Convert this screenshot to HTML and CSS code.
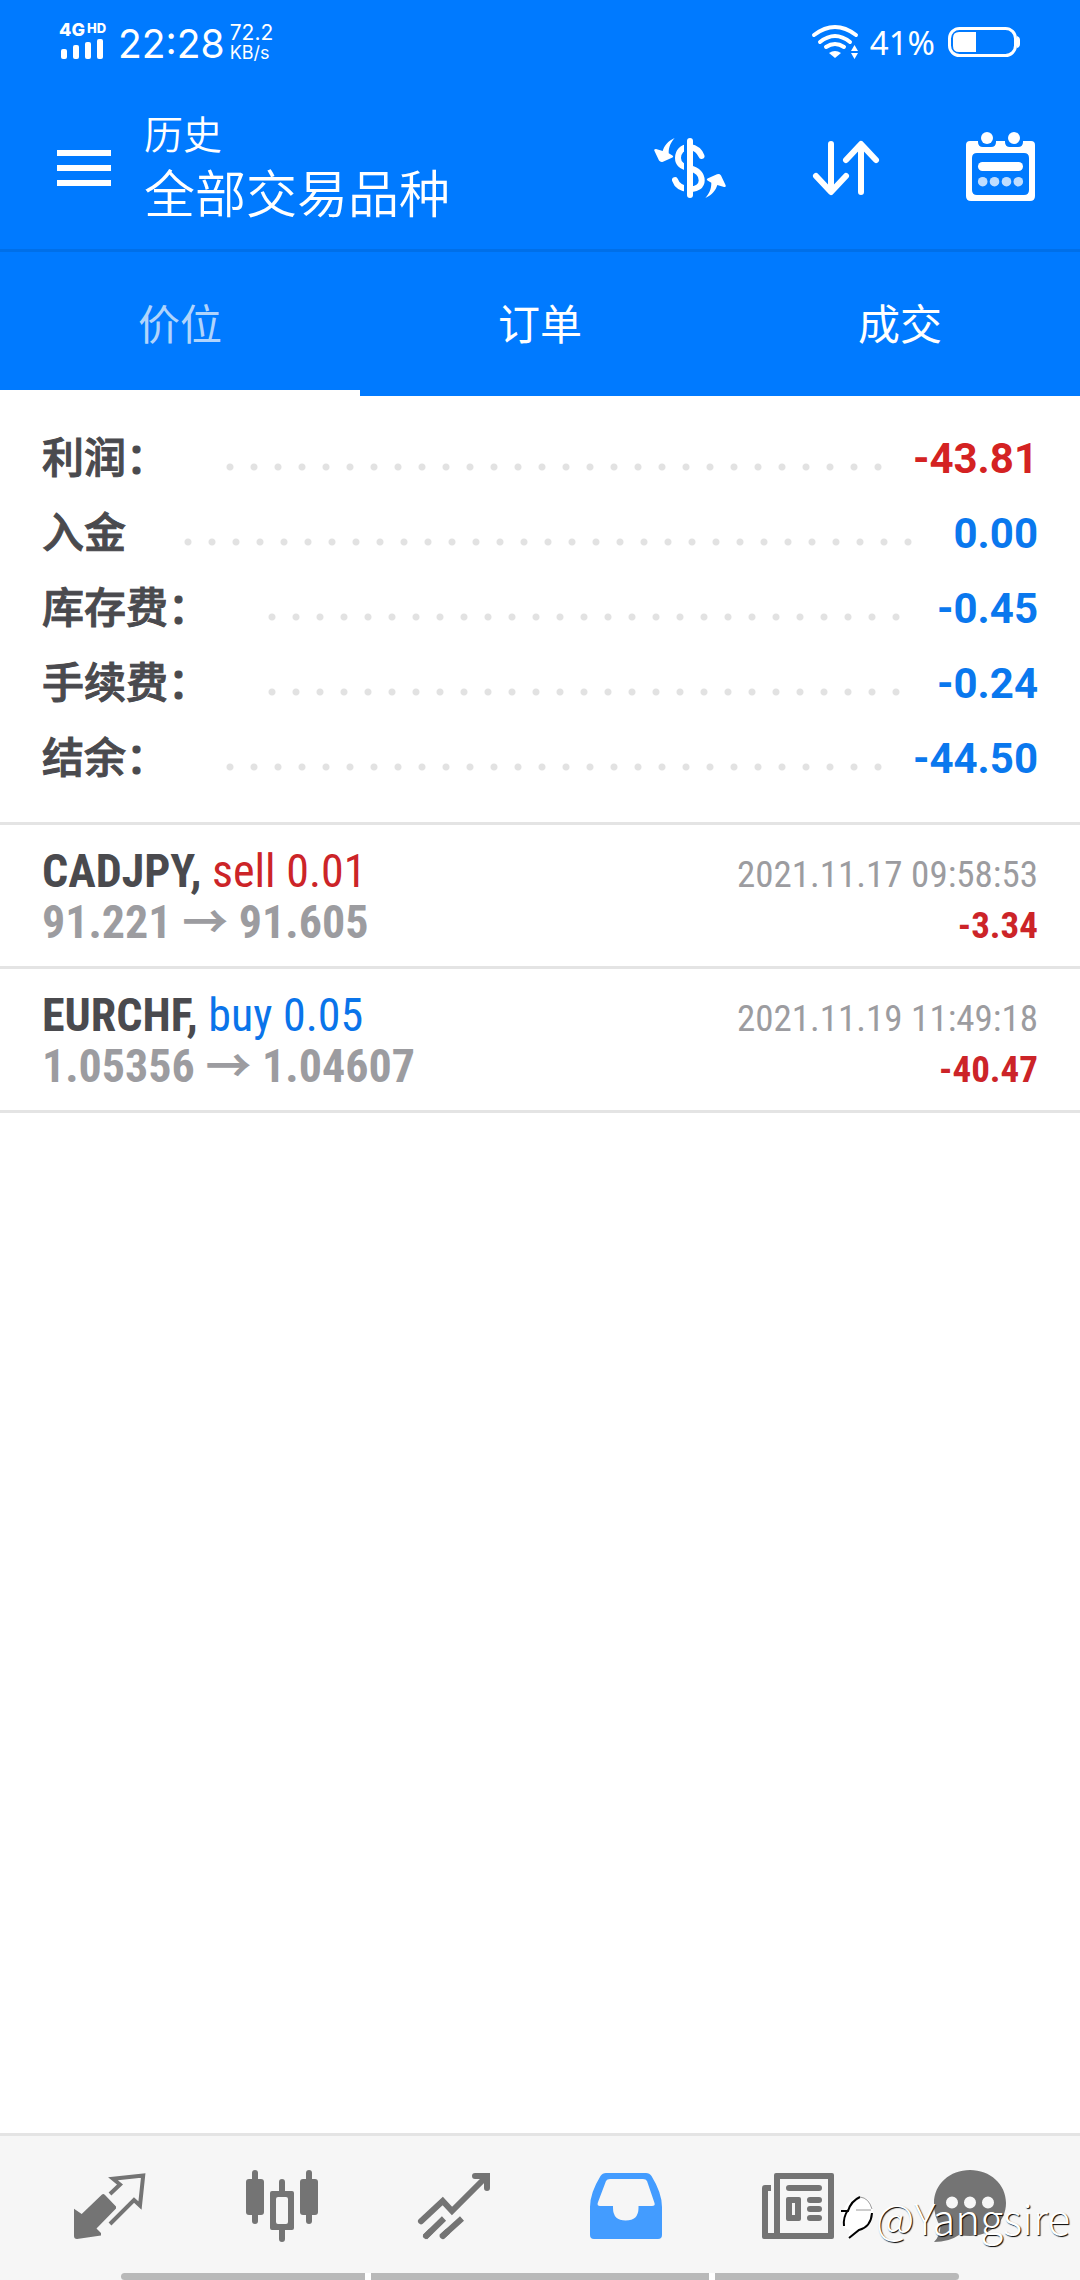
FILE: index.html
```html
<!DOCTYPE html>
<html lang="zh-CN">
<head>
<meta charset="utf-8">
<meta name="viewport" content="width=device-width, initial-scale=1">
<title>历史</title>
<link rel="stylesheet" href="styles.css">
</head>
<body>
<div class="app">
  <div class="status">
    <div class="signal">
      <div class="network">4G<span class="network-hd">HD</span></div>
      <svg class="bars" viewBox="0 0 44 20" width="44" height="20" fill="currentColor"><rect y="10" width="6" height="10" rx="2"/><rect x="12" y="6" width="6" height="14" rx="2"/><rect x="24" y="3" width="6" height="17" rx="2"/><rect x="36" width="6" height="20" rx="2"/></svg>
    </div>
    <div class="clock">22:28</div>
    <div class="speed"><span>72.2</span><span class="speed-unit">KB/s</span></div>
    <svg class="wifi" viewBox="0 0 46 34" width="46" height="34" fill="none" stroke="currentColor" stroke-width="4" stroke-linecap="round"><path d="M2 10Q23-6 44 10M8 17Q23 5 38 17M14 22Q23 16 32 22"/><path d="M17 28Q23 24 29 28L23 33Z" fill="currentColor" stroke="none"/><path d="M39 26L42.500 20 46 26ZM39 28L42.500 34 46 28Z" fill="currentColor" stroke="none"/></svg>
    <div class="percent">41%</div>
    <svg class="battery" viewBox="0 0 72 30" width="72" height="30"><rect x="1.500" y="1.500" width="66" height="27" rx="10" fill="none" stroke="currentColor" stroke-width="3"/><path d="M28 5V25H11Q5 25 5 19V11Q5 5 11 5ZM69 9Q72 10 72 13V17Q72 20 69 21Z" fill="currentColor"/></svg>
  </div>

  <header class="toolbar">
    <button class="icon-button menu" aria-label="菜单"><svg viewBox="0 0 54 36" width="54" height="36" fill="currentColor"><path d="M0 0H54V6H0ZM0 15H54V21H0ZM0 30H54V36H0Z"/></svg></button>
    <div class="heading">
      <h1 class="heading-title">历史</h1>
      <p class="heading-filter">全部交易品种</p>
    </div>
    <div class="actions">
      <button class="icon-button" aria-label="货币"><svg viewBox="0 0 72 72" width="72" height="72" fill="none" stroke="currentColor" stroke-width="6" stroke-linecap="round"><path d="M47.500 24C45.500 19 42 16 36 15C28 14.500 24 20 24 26C24 32 28 35 36 36.500C44 38 47.700 43 47.700 48.500C47.700 54 43 57 36 57.500C29 57 23 54 21 48"/><path class="cut" d="M31.500 8V64" stroke-width="3" stroke-linecap="butt"/><path d="M36 9V63"/><g fill="currentColor" stroke="none"><path id="swap" d="M20.700 6C14 9 10 14 8.700 19L2 17Q-.5 17 .5 19L5 28.500Q6.500 30.500 9 29.700L18.500 25.500Q20 24.500 18.500 23.500L14.700 21.300C14.500 15 17 10 20.700 6Z"/><use href="#swap" transform="rotate(180 36 36)"/></g></svg></button>
      <button class="icon-button" aria-label="排序"><svg viewBox="0 0 72 72" width="72" height="72" fill="none" stroke="currentColor" stroke-width="6" stroke-linecap="round" stroke-linejoin="round"><path d="M21 12V59M6 44L21 60 36 44M51 60V13M36 28L51 12 66 28"/></svg></button>
      <button class="icon-button" aria-label="日期"><svg viewBox="0 0 72 72" width="72" height="72" fill="currentColor"><path fill-rule="evenodd" d="M4 9H12V10Q12 15 17 15H25Q30 15 30 10V9H39V10Q39 15 44 15H52Q57 15 57 10V9H65Q69 9 69 13V64Q69 69 64 69H5Q0 69 0 64V13Q0 9 4 9ZM11 21Q6 21 6 26V58Q6 63 11 63H58Q63 63 63 58V26Q63 21 58 21Z"/><circle cx="21" cy="6" r="6"/><circle cx="48" cy="6" r="6"/><rect x="12" y="30" width="45" height="9" rx="4.500"/><g opacity=".75"><circle cx="16.700" cy="49.700" r="4.800"/><circle cx="28.500" cy="49.700" r="4.800"/><circle cx="40.500" cy="49.700" r="4.800"/><circle cx="52.300" cy="49.700" r="4.800"/></g></svg></button>
    </div>
  </header>

  <div class="tabs" role="tablist">
    <button class="tab tab-active" role="tab" aria-selected="true">价位</button>
    <button class="tab" role="tab" aria-selected="false">订单</button>
    <button class="tab" role="tab" aria-selected="false">成交</button>
  </div>

  <main class="content">
    <dl class="summary">
      <div class="summary-row"><dt>利润：</dt><dd class="loss">-43.81</dd></div>
      <div class="summary-row"><dt>入金</dt><dd>0.00</dd></div>
      <div class="summary-row"><dt>库存费：</dt><dd>-0.45</dd></div>
      <div class="summary-row"><dt>手续费：</dt><dd>-0.24</dd></div>
      <div class="summary-row"><dt>结余：</dt><dd>-44.50</dd></div>
    </dl>
    <ul class="deals">
      <li class="deal">
        <div class="deal-line"><span class="symbol">CADJPY, <span class="side sell">sell 0.01</span></span><time class="date">2021.11.17 09:58:53</time></div>
        <div class="deal-line"><span class="prices">91.221 <span class="arrow">→</span> 91.605</span><span class="result">-3.34</span></div>
      </li>
      <li class="deal">
        <div class="deal-line"><span class="symbol">EURCHF, <span class="side buy">buy 0.05</span></span><time class="date">2021.11.19 11:49:18</time></div>
        <div class="deal-line"><span class="prices">1.05356 <span class="arrow">→</span> 1.04607</span><span class="result">-40.47</span></div>
      </li>
    </ul>
  </main>

  <footer class="bottom">
    <nav class="nav">
      <a class="nav-item" href="#quotes" aria-label="行情"><svg viewBox="0 0 72 72" width="72" height="72"><path fill="currentColor" d="M0 38.700L7.700 44 28 24.500Q29.500 23.500 31 25L42 36.500V38.500L22.500 58.500 27 63V65.500L3 69Q0 69 0 66Z"/><path fill="none" stroke="currentColor" stroke-width="4" d="M36 24L46 14.500 39 8.700 69.200 5.400 66 35.500 60 30 36 54"/></svg></a>
      <a class="nav-item" href="#charts" aria-label="图表"><svg viewBox="0 0 72 72" width="72" height="72" fill="currentColor"><rect y="9" width="18" height="36" rx="3"/><rect x="6" width="6" height="54" rx="3"/><rect x="54" y="9" width="18" height="36" rx="3"/><rect x="60" width="6" height="54" rx="3"/><path fill-rule="evenodd" d="M26 21H46Q48 21 48 23V58Q48 60 46 60H26Q24 60 24 58V23Q24 21 26 21ZM32 27Q30 27 30 29V52Q30 54 32 54H40Q42 54 42 52V29Q42 27 40 27Z"/><path d="M33 22V12Q33 9 36 9Q39 9 39 12V22ZM33 59V69Q33 72 36 72Q39 72 39 69V59Z"/></svg></a>
      <a class="nav-item" href="#trade" aria-label="交易"><svg viewBox="0 0 72 72" width="72" height="72" fill="none" stroke="currentColor" stroke-width="6"><path stroke-linecap="round" d="M3 51.300L24.700 31 34 41 68 7M57 6H69V18"/><path d="M7 67L26 48.500M23.500 67L44 48.500"/><path stroke-linecap="round" d="M8 66L12 62M24.700 66L29 62"/></svg></a>
      <a class="nav-item nav-current" href="#history" aria-label="历史" aria-current="page"><svg viewBox="0 0 72 72" width="72" height="72"><path fill="currentColor" fill-rule="evenodd" d="M16 3H56Q59.500 3 61.500 6Q72 23 72 37V65Q72 69 68 69H4Q0 69 0 65V37Q0 23 10.500 6Q12.500 3 16 3ZM20 9Q17 9 16 11L7.700 33Q7 36 10 36H23V38Q23 50.500 35.700 50.500Q48.500 50.500 48.500 38V36H62Q65.500 36 64.500 33L57 11Q56 9 53 9Z"/></svg></a>
      <a class="nav-item" href="#news" aria-label="新闻"><svg viewBox="0 0 72 72" width="72" height="72" fill="currentColor"><path fill-rule="evenodd" d="M14 3H70Q72 3 72 5V67Q72 69 70 69H2Q0 69 0 67V18Q0 15 3 15H9V21H6V63H12V5Q12 3 14 3ZM18 9V63H66V9ZM26 27H37Q39 27 39 29V49Q39 51 37 51H26Q24 51 24 49V29Q24 27 26 27ZM30 33V45H33V33Z"/><path fill="none" stroke="currentColor" stroke-width="6" stroke-linecap="round" d="M27 18H57M48 30H57M48 39H57M48 48H57"/></svg></a>
      <a class="nav-item" href="#chat" aria-label="聊天"><svg viewBox="0 0 72 72" width="72" height="72"><path fill="currentColor" fill-rule="evenodd" d="M36 0C56 0 72 14 72 33C72 52 56 66 36 66Q30 66 25 65Q15 72 0 72Q6 66 6.500 56Q0 48 0 33C0 14 16 0 36 0ZM18 26.500A6 6 0 1 0 18 38.500A6 6 0 1 0 18 26.500ZM36 26.500A6 6 0 1 0 36 38.500A6 6 0 1 0 36 26.500ZM54 26.500A6 6 0 1 0 54 38.500A6 6 0 1 0 54 26.500Z"/></svg></a>
    </nav>
    <div class="gestures"><span class="gesture"></span><span class="gesture gesture-home"></span><span class="gesture"></span></div>
    <div class="watermark">
      <svg viewBox="0 0 34 44" width="34" height="44"><path fill="#fff" d="M3 16Q8 2 22 2Q32 4 33 16Q33 34 17 36L8 43 10 35Q0 34 3 16Z"/><g fill="none" stroke-width="2"><path stroke="#000" d="M1 16H8Q11 6 20 2M8 15Q3 22 4 31M32 18Q31 32 19 35L9 43"/><path stroke="#999" stroke-width="1" d="M20 2Q29 3 32 14M16 15H31"/></g></svg>
      <span>@Yangsire</span>
    </div>
  </footer>
</div>
</body>
</html>
```

FILE: styles.css
```css
* { box-sizing: border-box; }

body {
  margin: 0;
  background: #fff;
  color: #4a4a4e;
  font-family: Roboto, "Noto Sans CJK SC", sans-serif;
}

h1, p, dl, dd, ul { margin: 0; padding: 0; }
svg { display: block; overflow: visible; }

.app {
  display: flex;
  flex-direction: column;
  min-height: 100vh;
}

/* Status bar */
.status {
  display: flex;
  align-items: center;
  height: 84px;
  padding: 0 60px 0 59px;
  background: #007aff;
  color: #fff;
  font-family: Inter, sans-serif;
}
.signal { width: 59px; padding-bottom: 3px; }
.network {
  display: flex;
  align-items: flex-start;
  gap: 2px;
  font-size: 18px;
  line-height: 16px;
  font-weight: 800;
}
.network-hd { font-size: 13px; line-height: 12px; }
.bars { margin: 1px 0 0 2px; }
.clock { font-size: 39px; line-height: 48px; padding-top: 4px; }
.speed {
  display: flex;
  flex-direction: column;
  margin: 2px auto 0 5px;
  font-size: 21px;
  line-height: 20px;
}
.speed-unit { font-size: 18px; }
.percent { margin: 2px 13px 0 12px; font-size: 33px; line-height: 40px; font-family: "Noto Sans", sans-serif; }

/* Toolbar */
.toolbar {
  display: flex;
  align-items: center;
  height: 168px;
  padding: 3px 42px 0 57px;
  background: #007aff;
  border-bottom: 3px solid #006fe8;
  color: #fff;
}
.icon-button {
  padding: 0;
  border: 0;
  background: none;
  color: inherit;
}
.cut { stroke: #007aff; }
.heading { margin-left: 33px; }
.heading-title { font-size: 39px; line-height: 56px; font-weight: 350; }
.heading-filter { font-size: 51px; line-height: 64px; font-weight: 350; }
.actions { display: flex; gap: 84px; margin-left: auto; }

/* Tabs */
.tabs {
  display: grid;
  grid-template-columns: repeat(3, 1fr);
  background: #007aff;
}
.tab {
  height: 144px;
  padding: 10px 0 0;
  border: 0;
  border-bottom: 6px solid transparent;
  background: none;
  color: #fff;
  font: 400 42px/60px Roboto, "Noto Sans CJK SC", sans-serif;
}
.tab-active { border-color: #fff; color: #b0d4fc; }

/* Totals */
.content { flex: 1; }
.summary { padding: 25px 42px 26px; }
.summary-row {
  display: flex;
  align-items: center;
  font-size: 42px;
  line-height: 75px;
}
.summary-row dt { font-weight: 500; -webkit-text-stroke: 1px currentColor; }
.summary-row dd { order: 2; font-weight: 700; color: #0a78ee; }
.summary-row .loss { color: #d42222; }
/* dotted leader between the label and its value */
.summary-row::after {
  content: "";
  order: 1;
  flex: 1;
  height: 8px;
  margin: 16px 28px 0 50px;
  background: radial-gradient(circle, #e2e2e2 3px, transparent 4px) 0 0 / 24px 8px repeat-x;
}

/* Deals */
.deals { list-style: none; border-top: 3px solid #e4e4e4; }
.deal {
  padding: 21px 42px 18px;
  border-bottom: 3px solid #e4e4e4;
  font-family: "Roboto Condensed", "Liberation Sans Narrow", Roboto, sans-serif;
}
.deal-line {
  display: flex;
  align-items: baseline;
  justify-content: space-between;
  height: 51px;
  line-height: 51px;
}
.symbol { font-size: 46px; font-weight: 700; }
.side { font-weight: 400; }
.sell { color: #cc2428; }
.buy { color: #0a74ea; }
.prices { font-size: 46px; font-weight: 700; color: #9c9ca0; }
.arrow { font-family: "Noto Sans CJK SC", sans-serif; line-height: 0; }
.date { font-size: 37px; color: #9c9ca0; }
.result { font-size: 37px; font-weight: 700; color: #cc2428; }

/* Bottom bar */
.bottom {
  position: relative;
  border-top: 3px solid #e4e4e4;
  background: #f6f6f6;
}
.nav {
  display: grid;
  grid-template-columns: repeat(6, 1fr);
  padding: 34px 24px 31px;
}
.nav-item { display: flex; justify-content: center; color: #747474; }
.nav-current { color: #439cff; }
.gestures {
  display: flex;
  gap: 6px;
  height: 7px;
  margin: 0 121px;
  background: linear-gradient(#fff, #fff) center / 90% 100% no-repeat;
}
.gesture { flex: 244; background: #b9b9b9; }
.gesture-home { flex: 338; }
.gesture:first-child { border-radius: 4px 0 0 4px; }
.gesture:last-child { border-radius: 0 4px 4px 0; }
.watermark {
  position: absolute;
  right: 10px;
  bottom: 39px;
  display: flex;
  align-items: center;
  gap: 2px;
  color: #fff;
  font: 300 42px/48px "Noto Sans CJK SC", sans-serif;
  text-shadow: 1px 1px 1px #000;
}
```
